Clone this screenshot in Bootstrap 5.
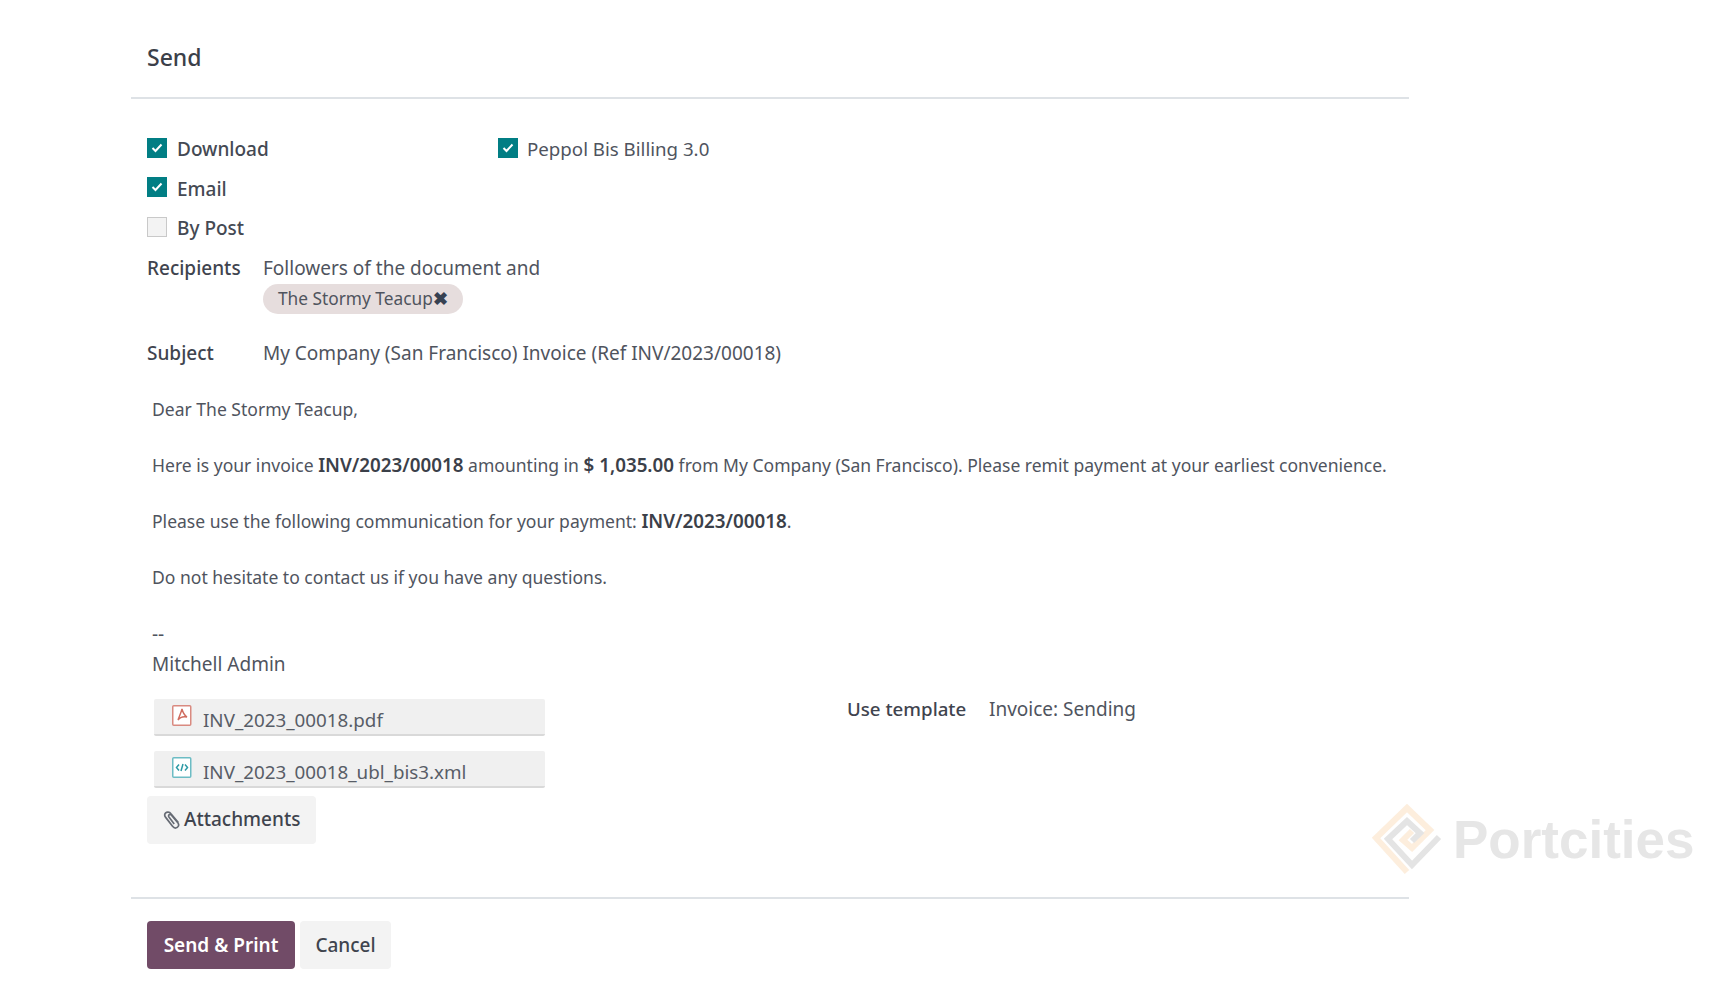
<!DOCTYPE html>
<html lang="en">
<head>
<meta charset="utf-8">
<title>Send</title>
<link rel="stylesheet" href="https://cdn.jsdelivr.net/npm/bootstrap@5.3.0/dist/css/bootstrap.min.css">
<style>
html,body{height:100%}
body{font-family:"Noto Sans","Open Sans",sans-serif;color:#4f545e;background:#fff;font-size:19px;line-height:28.5px;overflow:hidden;position:relative}
.dlg{width:1278px;margin-left:131px}
.dlg-head{height:99px;padding:38px 16px 0;border-bottom:2px solid #dee2e6}
.dlg-title{font-size:23px;line-height:38px;color:#3b4049;font-weight:500;margin:0}
.dlg-body{height:798px;padding:0 16px}
.check-cols{padding-top:30.500px}
.opt-col{width:351px}
.opt{height:39.500px;gap:10px}
.opt-peppol{font-size:18.700px;gap:9px}
.box{width:20px;height:20px;background:#017e84;display:flex;align-items:center;justify-content:center;flex:none;position:relative;top:-1.500px}
.box.off{background:#f3f3f3;border:1px solid #c9c9c9}
.lbl-strong{font-weight:500;color:#444953}
.field-lab{width:116px;flex:none;font-weight:500;color:#3f444e}
.recip-row{margin-top:5.500px}
.chip{display:flex;align-items:center;height:30px;background:#e6dddd;border-radius:15px;padding:0 15px;font-size:17.300px;color:#4f545e;width:200px;white-space:nowrap;margin-top:2px}
.chip-x{font-weight:700;font-size:18px;color:#374151;line-height:1;position:relative;top:-1px}
.subj-row{margin-top:24.500px}
.msg{padding-left:5px;font-size:17.550px;color:#4f545e;margin-top:26.500px}
.msg p{margin:0;line-height:30px;white-space:nowrap}
.msg p.gap-para{margin-top:26px}
.msg p.gap-sig{margin-top:27px;font-size:19px}
.msg p.sig-name{font-size:19px}
.msg b{font-weight:600;font-size:18.800px;color:#3b4049}
.att-row{margin-top:16px}
.att-left{width:700px;flex:none;padding-top:4px}
.att-file{width:391px;height:37px;background:#f0f0f0;border-bottom:2px solid #d9d9d9;border-radius:2px;margin-left:7px;padding-left:18px;gap:11px;color:#585d67;font-size:18.800px}
.att-file + .att-file{margin-top:15px}
.att-file svg{position:relative;top:-1px}
.att-name{position:relative;top:4px}
.btn-att{background:#f3f3f3;border:0;border-radius:4px;color:#3f444e;font-weight:500;font-size:19px;height:48px;padding:0 16px;display:inline-flex;align-items:center;gap:3px;margin-top:8px}
.btn-att:hover{background:#f3f3f3;color:#3f444e}
.dlg-foot{border-top:2px solid #dee2e6;padding:22px 16px 0;gap:5px}
.btn-send{background:#714b67;color:#fff;border:0;border-radius:4px;height:48px;width:148px;font-weight:600;font-size:19px;padding:0}
.btn-cancel{background:#f3f3f3;color:#3f444e;border:0;border-radius:4px;height:48px;width:91px;font-weight:500;font-size:19px;padding:0}
.tpl-lab{font-weight:500;color:#3f444e;width:142px;font-size:18.700px}
.wmark{position:absolute;left:1365px;top:800px;display:flex;align-items:center;gap:3px}
.wmark-txt{font-family:"Liberation Sans",sans-serif;font-weight:700;font-size:53px;line-height:1;color:#e6e6e6;position:relative;top:-1px}
</style>
</head>
<body>
<div class="dlg">
  <div class="dlg-head"><h5 class="dlg-title">Send</h5></div>
  <div class="dlg-body">
    <div class="d-flex check-cols">
      <div class="opt-col">
        <div class="d-flex align-items-center opt lbl-strong"><span class="box"><svg width="12" height="10" viewBox="0 0 12 10"><path d="M1.500 5l3 3 6-6.500" fill="none" stroke="#fff" stroke-width="2"/></svg></span>Download</div>
        <div class="d-flex align-items-center opt lbl-strong"><span class="box"><svg width="12" height="10" viewBox="0 0 12 10"><path d="M1.500 5l3 3 6-6.500" fill="none" stroke="#fff" stroke-width="2"/></svg></span>Email</div>
        <div class="d-flex align-items-center opt lbl-strong"><span class="box off"></span>By Post</div>
      </div>
      <div>
        <div class="d-flex align-items-center opt opt-peppol"><span class="box"><svg width="12" height="10" viewBox="0 0 12 10"><path d="M1.500 5l3 3 6-6.500" fill="none" stroke="#fff" stroke-width="2"/></svg></span>Peppol Bis Billing 3.0</div>
      </div>
    </div>
    <div class="d-flex recip-row">
      <div class="field-lab">Recipients</div>
      <div>
        <div>Followers of the document and</div>
        <span class="chip">The Stormy Teacup<span class="chip-x">&#10006;</span></span>
      </div>
    </div>
    <div class="d-flex subj-row">
      <div class="field-lab">Subject</div>
      <div>My Company (San Francisco) Invoice (Ref INV/2023/00018)</div>
    </div>
    <div class="msg">
      <p>Dear The Stormy Teacup,</p>
      <p class="gap-para">Here is your invoice <b>INV/2023/00018</b> amounting in <b>$ 1,035.00</b> from My Company (San Francisco). Please remit payment at your earliest convenience.</p>
      <p class="gap-para">Please use the following communication for your payment: <b>INV/2023/00018</b>.</p>
      <p class="gap-para">Do not hesitate to contact us if you have any questions.</p>
      <p class="gap-sig">--</p>
      <p class="sig-name">Mitchell Admin</p>
    </div>
    <div class="d-flex att-row">
      <div class="att-left">
        <div class="d-flex align-items-center att-file">
          <svg width="20" height="21" viewBox="0 0 20 21"><rect x=".75" y=".75" width="18" height="19.500" rx="1" fill="#fff" stroke="#d98a80" stroke-width="1.500"/><path d="M10 4c1 4 2 6 5 8-3-.5-7 0-9 3 1-3 3-7 4-11z" fill="none" stroke="#cf6c5f" stroke-width="1.400"/></svg>
          <span class="att-name">INV_2023_00018.pdf</span>
        </div>
        <div class="d-flex align-items-center att-file">
          <svg width="20" height="21" viewBox="0 0 20 21"><rect x=".75" y=".75" width="18" height="19.500" rx="1" fill="#fff" stroke="#6cbcc4" stroke-width="1.500"/><path d="M7 7.500L4.500 10.500 7 13.500M13 7.500l2.500 3-2.500 3M11 7l-2 7" fill="none" stroke="#2c9aa5" stroke-width="1.500"/></svg>
          <span class="att-name">INV_2023_00018_ubl_bis3.xml</span>
        </div>
        <button type="button" class="btn btn-att"><svg width="18" height="20" viewBox="0 0 17 19"><path d="M14.500 12L7.500 3.500c-1.500-2-4-1.800-5-.8s-1.200 2.800 0 4.300l6.500 8.500c1.200 1.500 3 2 4.500 1s1.500-3 .5-4.500L8 5c-.6-.8-1.500-1-2.200-.5s-.7 1.500-.2 2.200l5 6.500" fill="none" stroke="#666b74" stroke-width="1.600"/></svg>Attachments</button>
      </div>
      <div class="d-flex">
        <div class="tpl-lab">Use template</div>
        <div>Invoice: Sending</div>
      </div>
    </div>
  </div>
  <div class="d-flex dlg-foot">
    <button type="button" class="btn btn-send">Send &amp; Print</button>
    <button type="button" class="btn btn-cancel">Cancel</button>
  </div>
</div>
<div class="wmark">
  <svg width="85" height="80" viewBox="0 0 85 80"><path d="M42 72L11 38 42 8 65 30 47 48 38 40 47 31" fill="none" stroke="#fdeedd" stroke-width="6"/><path d="M74 37L47 65 23 39 42 21 55 33 47 41" fill="none" stroke="#e4e4e4" stroke-width="6"/></svg>
  <span class="wmark-txt">Portcities</span>
</div>
</body>
</html>
